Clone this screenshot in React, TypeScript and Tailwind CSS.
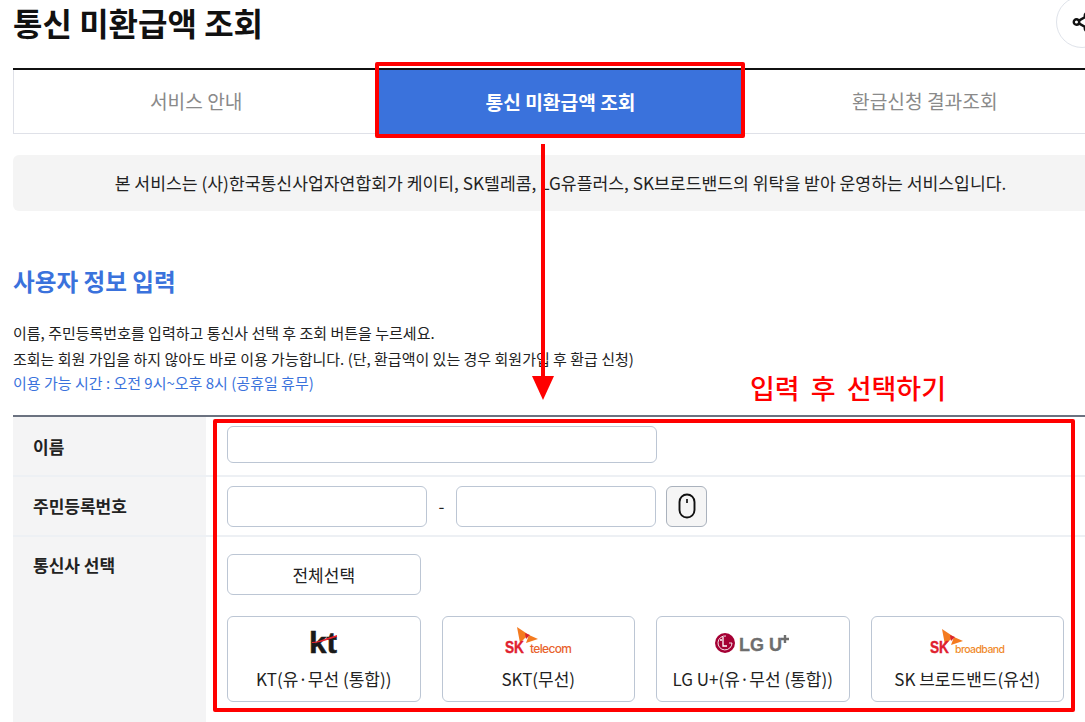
import React from 'react'
import { Share2 } from 'lucide-react'

const FONT = "font-['Noto_Sans_CJK_KR','Noto_Sans',sans-serif]"

function KtLogo() {
  return (
    <svg width="30" height="40" viewBox="0 0 30 40">
      <text x="0" y="35" fontFamily="Liberation Sans" fontWeight="700" fontSize="29" fill="#1a1a1a" stroke="#1a1a1a" strokeWidth="0.5" textLength="28" lengthAdjust="spacingAndGlyphs">kt</text>
      <path d="M3 24 C10 24 20 19 28 17 L28 19 C20 21 10 25.5 3 25 Z" fill="#e8222c" />
    </svg>
  )
}

function SkLogo({ word, wordColor, width, wingY, wordSize }: { word: string; wordColor: string; width: number; wingY: number; wordSize: number }) {
  // svg is 8px wider than the artwork so the word never touches its edge
  return (
    <svg width={width + 8} height="40" viewBox={`-4 0 ${width + 8} 40`}>
      <g transform={`translate(1 ${wingY})`}>
        <path d="M12 0 L24 8 L20 11 L15 16 Z" fill="#f47b20" />
        <path d="M24 8 L33 12 L21 16 Z" fill="#f47b20" />
        <path d="M20 6 L25 8 L21 12 Z" fill="#d9232e" />
      </g>
      <text x="1" y="35" fontFamily="Liberation Sans" fontWeight="700" fontSize="16" fill="#e0202f" stroke="#e0202f" strokeWidth="0.4" textLength="19" lengthAdjust="spacingAndGlyphs">SK</text>
      <text x="26" y="35" fontFamily="Inter" fontWeight="500" fontSize={wordSize} fill={wordColor} textLength={width - 26} lengthAdjust="spacing">{word}</text>
    </svg>
  )
}

function LgLogo() {
  return (
    <svg width="78" height="40" viewBox="0 0 78 40">
      <g transform="translate(0 13)">
        <circle cx="11" cy="12" r="10" fill="#a50034" />
        <path d="M9 6 V15 H13" stroke="#fff" strokeWidth="1.3" fill="none" />
        <circle cx="7" cy="9" r="1" fill="#fff" />
        <path d="M15 12 H18 A7 7 0 1 1 12 5" stroke="#fff" strokeWidth="0.9" fill="none" />
        <text x="25" y="20" fontFamily="Liberation Sans" fontWeight="700" fontSize="18" fill="#6e6e6e" stroke="#6e6e6e" strokeWidth="0.3">LG U</text>
        <path d="M71 4 V12 M67 8 H75" stroke="#6e6e6e" strokeWidth="2.4" />
      </g>
    </svg>
  )
}

function Carrier({ logo, label }: { logo: React.ReactNode; label: string }) {
  return (
    <button className="w-[193.5px] h-[86px] rounded-md border border-[#bcc6d4] bg-white flex flex-col items-center">
      <div className="h-[40px] mt-[1px] flex justify-center">{logo}</div>
      <div className="mt-[9px] text-[17px] leading-[24px] text-[#222]">{label}</div>
    </button>
  )
}

export default function App() {
  return (
    <div className={`relative w-[1085px] h-[722px] overflow-hidden bg-white text-[#222] ${FONT}`}>
      <div className="ml-[13px] w-[1095px]">
        {/* Title */}
        <div className="h-[68px] flex justify-between items-start">
          <h1 className="text-[32px] leading-[44px] font-bold text-[#111]">통신 미환급액 조회</h1>
          <button className="-mt-[4px] w-[52px] h-[52px] rounded-full border border-[#dfe3ea] flex items-center justify-center text-[#111]">
            <Share2 size={22} strokeWidth={2.6} />
          </button>
        </div>

        {/* Tabs */}
        <div className="flex h-[66px] border-t-2 border-[#111]">
          <div className="flex-1 flex items-center justify-center border-l border-b border-[#dfe1e8] text-[19.2px] text-[#8a8a8a]">서비스 안내</div>
          <div className="flex-1 flex items-center justify-center bg-[#3a72dc] text-[19.2px] font-bold text-white">통신 미환급액 조회</div>
          <div className="flex-1 flex items-center justify-center border-r border-b border-[#dfe1e8] text-[19.2px] text-[#8a8a8a]">환급신청 결과조회</div>
        </div>

        {/* Notice */}
        <div className="mt-[21px] h-[56px] rounded-md bg-[#f4f4f4] flex items-center justify-center text-[17.2px]">
          본 서비스는 (사)한국통신사업자연합회가 케이티, SK텔레콤, LG유플러스, SK브로드밴드의 위탁을 받아 운영하는 서비스입니다.
        </div>

        {/* User info */}
        <h2 className="mt-[53px] text-[23.6px] leading-[34px] font-bold text-[#3a72dc]">사용자 정보 입력</h2>
        <div className="mt-[22px] text-[15px]">
          <p className="leading-[26px]">이름, 주민등록번호를 입력하고 통신사 선택 후 조회 버튼을 누르세요.</p>
          <p className="leading-[25px]">조회는 회원 가입을 하지 않아도 바로 이용 가능합니다. (단, 환급액이 있는 경우 회원가입 후 환급 신청)</p>
          <p className="leading-[24px] text-[#3a72dc]">이용 가능 시간 : 오전 9시~오후 8시 (공휴일 휴무)</p>
        </div>

        {/* Form */}
        <div className="mt-[20px] border-t-2 border-[#6b7280]">
          <div className="flex h-[60px] border-b-2 border-[#edf0f4]">
            <div className="w-[193px] bg-[#f4f4f5] pl-[20px] pt-[2px] flex items-center text-[17px] font-bold">이름</div>
            <div className="pl-[21px] pt-[9px]">
              <input className="block w-[430px] h-[37px] rounded-md border border-[#bcc6d4] bg-white" />
            </div>
          </div>
          <div className="flex h-[60px] border-b-2 border-[#edf0f4]">
            <div className="w-[193px] bg-[#f4f4f5] pl-[20px] flex items-center text-[17px] font-bold">주민등록번호</div>
            <div className="pl-[21px] flex items-center">
              <input className="w-[200px] h-[41px] rounded-md border border-[#bcc6d4] bg-white" />
              <span className="w-[29px] text-center text-[17px]">-</span>
              <input className="w-[200px] h-[41px] rounded-md border border-[#bcc6d4] bg-white" />
              <button className="ml-[10px] w-[41px] h-[41px] rounded-md border border-[#aab2bd] bg-[#f5f5f5] flex items-center justify-center">
                <svg width="18" height="26" viewBox="0 0 18 26" fill="none" stroke="#111" strokeWidth="1.9">
                  <rect x="1.5" y="1.5" width="15" height="23" rx="7.5" />
                  <path d="M9 6 V10" strokeWidth="1.7" />
                </svg>
              </button>
            </div>
          </div>
          <div className="flex h-[190px]">
            <div className="w-[193px] bg-[#f4f4f5] pl-[20px] pt-[15px] text-[17px] leading-[26px] font-bold">통신사 선택</div>
            <div className="pl-[21px] pt-[17px]">
              <button className="block w-[193.5px] h-[41px] rounded-md border border-[#bcc6d4] bg-white text-[17px]">전체선택</button>
              <div className="mt-[21px] flex gap-[21px]">
                <Carrier logo={<KtLogo />} label="KT(유·무선 (통합))" />
                <Carrier logo={<SkLogo word="telecom" wordColor="#e8622c" width={68} wingY={9} wordSize={12} />} label="SKT(무선)" />
                <Carrier logo={<LgLogo />} label="LG U+(유·무선 (통합))" />
                <Carrier logo={<SkLogo word="broadband" wordColor="#f08a2c" width={76} wingY={11} wordSize={10.5} />} label="SK 브로드밴드(유선)" />
              </div>
            </div>
          </div>
        </div>
      </div>

      {/* Red annotations */}
      <div className="absolute left-[375px] top-[62px] w-[370px] h-[76px] border-4 border-[#ff0000] rounded-[2px]" />
      <div className="absolute left-[541px] top-[144px] w-[4px] h-[234px] bg-[#ff0000]" />
      <div className="absolute left-[532px] top-[376px] w-0 h-0 border-x-[11px] border-x-transparent border-t-[24px] border-t-[#ff0000]" />
      <div className="absolute left-[750px] top-[369px] text-[27px] leading-[38px] font-medium text-[#ff0000] [word-spacing:5px]">입력 후 선택하기</div>
      <div className="absolute left-[213px] top-[419px] w-[862px] h-[293px] border-4 border-[#ff0000] rounded-[2px]" />
    </div>
  )
}
